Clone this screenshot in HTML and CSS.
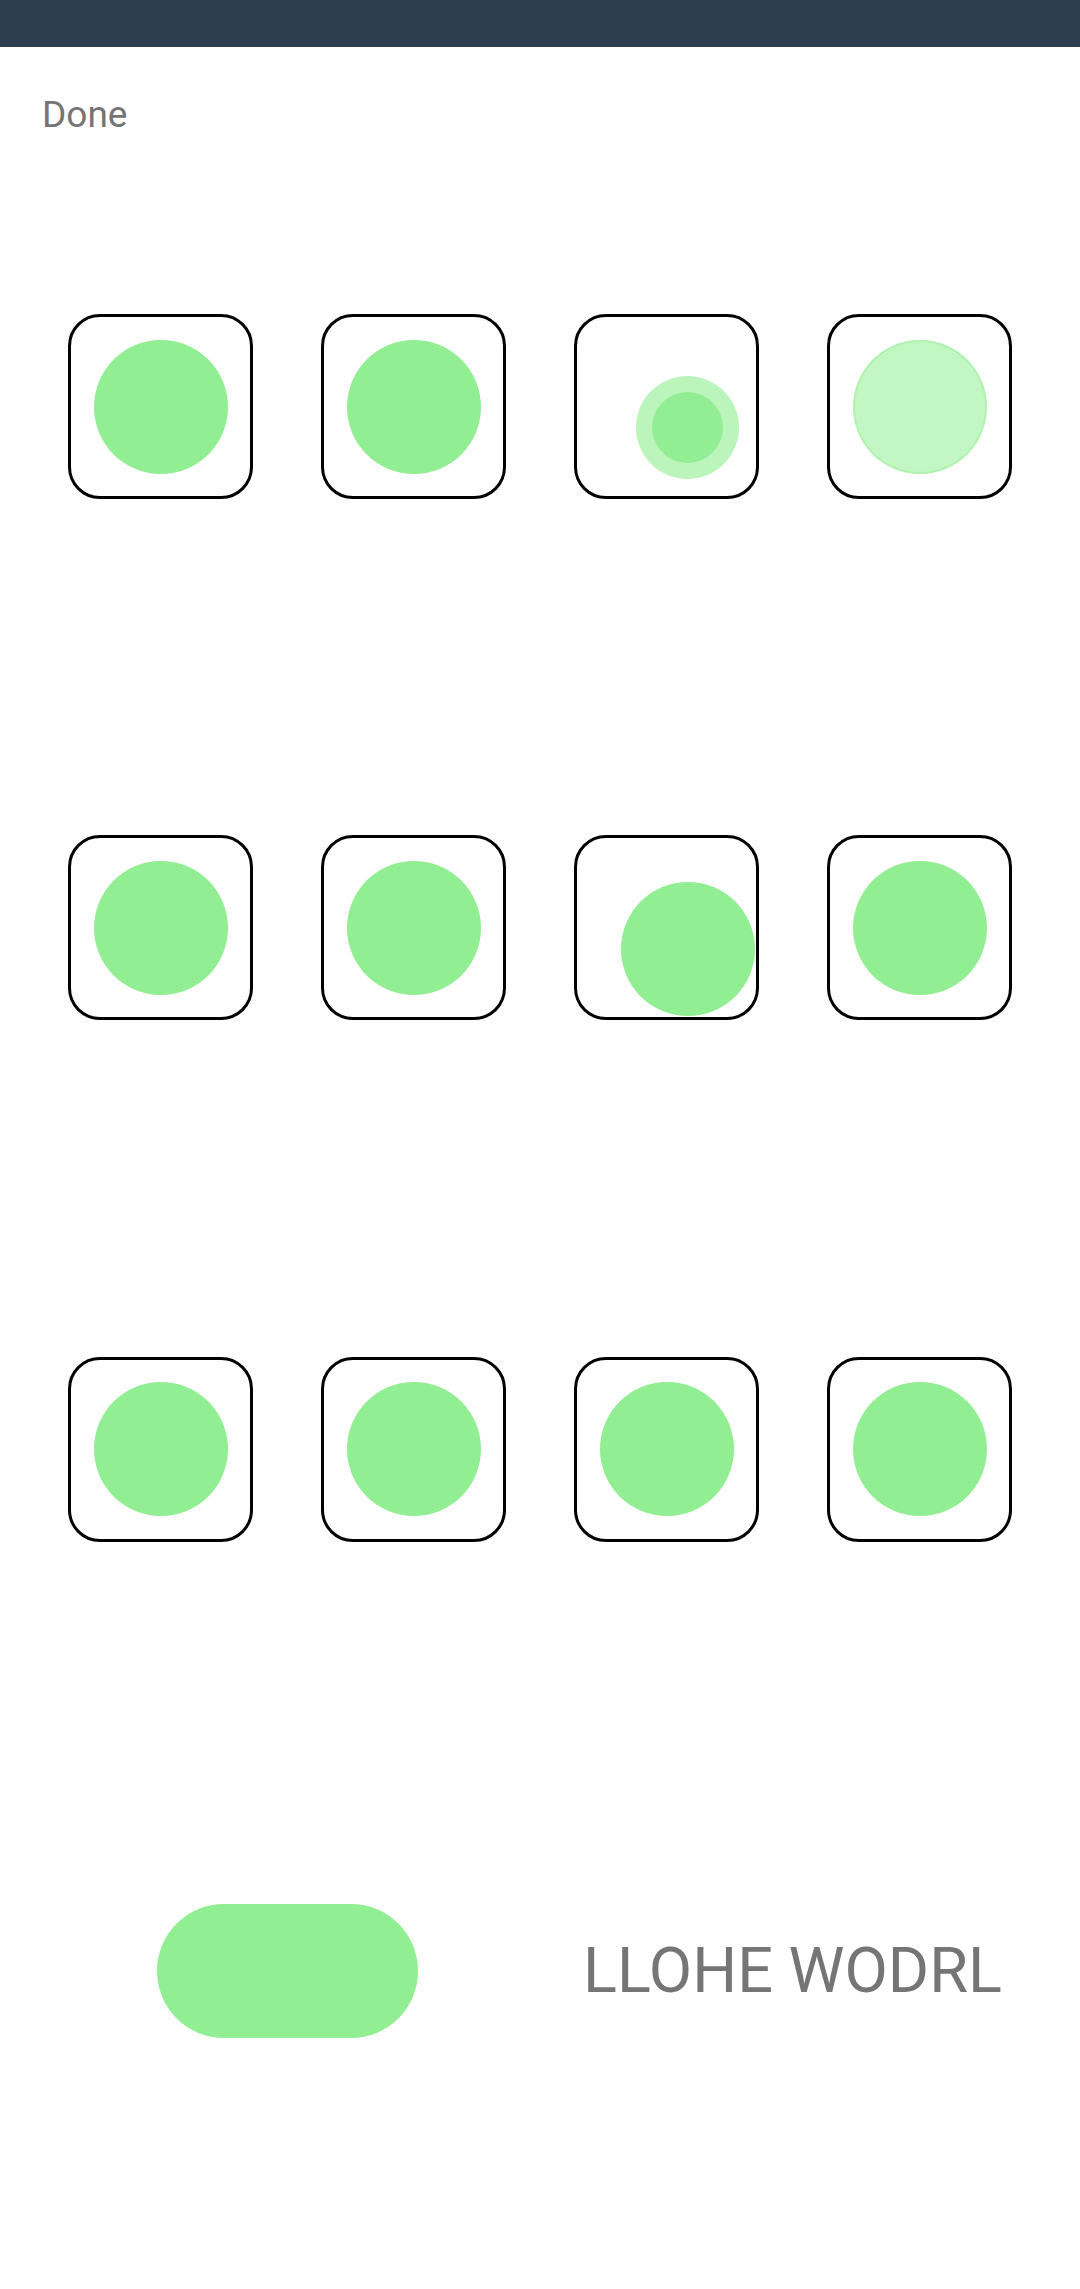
FILE: index.html
```html
<!DOCTYPE html>
<html>
<head>
<meta charset="utf-8">
<link rel="stylesheet" href="styles.css">
</head>
<body>
<div class="statusbar"></div>
<div class="header"><span class="done">Done</span></div>
<div class="grid">
  <div class="row">
    <div class="box"><div class="dot"></div></div>
    <div class="box"><div class="dot"></div></div>
    <div class="box"><div class="ring shifted"><div class="ring-core"></div></div></div>
    <div class="box"><div class="dot pale"></div></div>
  </div>
  <div class="row">
    <div class="box"><div class="dot"></div></div>
    <div class="box"><div class="dot"></div></div>
    <div class="box"><div class="dot shifted"></div></div>
    <div class="box"><div class="dot"></div></div>
  </div>
  <div class="row">
    <div class="box"><div class="dot"></div></div>
    <div class="box"><div class="dot"></div></div>
    <div class="box"><div class="dot"></div></div>
    <div class="box"><div class="dot"></div></div>
  </div>
  <div class="row bottom">
    <div class="pill"></div>
    <div class="label">LLOHE WODRL</div>
  </div>
</div>
</body>
</html>
```
FILE: styles.css
```css
html, body {
  margin: 0;
  padding: 0;
  background: #ffffff;
  font-family: Roboto, "Liberation Sans", sans-serif;
}
.statusbar {
  height: 47px;
  background: #2d3e50;
}
.header {
  height: 99px;
  box-sizing: border-box;
  padding: 46px 0 0 42px;
}
.done {
  display: block;
  font-size: 37px;
  line-height: 44px;
  color: #757575;
}
.grid {
  display: flex;
  flex-direction: column;
}
.row {
  height: 521.33px;
  display: flex;
  align-items: center;
  justify-content: center;
  gap: 68px;
}
.box {
  width: 185px;
  height: 185px;
  box-sizing: border-box;
  border: 3px solid #000;
  border-radius: 32px;
  display: flex;
  align-items: center;
  justify-content: center;
}
.dot {
  width: 134px;
  height: 134px;
  border-radius: 50%;
  background: #92ee92;
  flex: none;
}
.dot.pale {
  background: rgba(144, 238, 144, 0.55);
  box-shadow: inset 0 0 0 2px rgba(144, 238, 144, 0.35);
}
.shifted {
  transform: translate(21px, 21px);
}
.ring {
  width: 103px;
  height: 103px;
  border-radius: 50%;
  background: rgba(144, 238, 144, 0.6);
  display: flex;
  align-items: center;
  justify-content: center;
  flex: none;
}
.ring-core {
  width: 71px;
  height: 71px;
  border-radius: 50%;
  background: #92ee92;
}
.row.bottom {
  justify-content: flex-start;
  gap: 0;
}
.pill {
  margin-left: 157px;
  width: 261px;
  height: 134px;
  border-radius: 67px;
  background: #92ee92;
  flex: none;
}
.label {
  margin-left: 165px;
  font-size: 63px;
  color: #757575;
  white-space: nowrap;
}
```
